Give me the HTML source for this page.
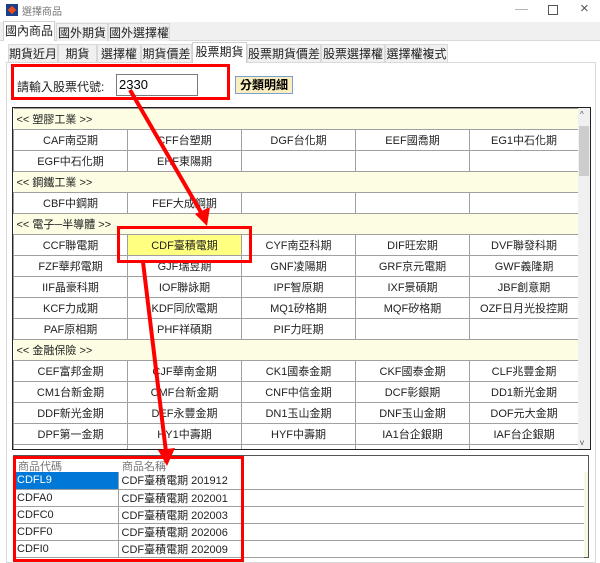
<!DOCTYPE html>
<html><head><meta charset="utf-8">
<style>
*{margin:0;padding:0;box-sizing:border-box}
body{width:600px;height:563px;background:#f0f0f0;position:relative;overflow:hidden;font-family:"Liberation Sans","Noto Sans CJK TC",sans-serif;font-size:11px;color:#222}
.a{position:absolute}
.tab{position:absolute;border:1px solid #d9d9d9;border-bottom:none;background:#f0f0f0;font-size:12px;text-align:center;line-height:18px;color:#222}
table{border-collapse:collapse;table-layout:fixed}
#g td{height:21px;border:1px solid #a0a0a0;border-top:1px solid #9a9a9a;text-align:center;font-size:11px;background:#fff;padding:0;white-space:nowrap}
#g td.h{background:#fdfde3;text-align:left;padding-left:3px;border-left:none;border-right:none}
#l td{height:17px;border-bottom:1px solid #a0a0a0;padding-left:3px;font-size:11px;white-space:nowrap;background:#fff}
</style></head><body>
<div class="a" style="left:0;top:0;width:600px;height:22px;background:#fff"></div>
<div class="a" style="left:6px;top:4px;width:12px;height:12px;background:#1b3f8a"></div>
<div class="a" style="left:9px;top:7px;width:6px;height:6px;background:#e84c1a;transform:rotate(45deg)"></div>
<div class="a" style="left:22px;top:3px;font-size:10px;color:#777">選擇商品</div>
<div class="a" style="left:515px;top:1px;font-size:13px;color:#aaa">—</div>
<div class="a" style="left:548px;top:5px;width:10px;height:10px;border:1px solid #555"></div>
<div class="a" style="left:580px;top:0px;font-size:15px;color:#555">×</div>
<div class="a" style="left:0;top:22px;width:600px;height:19px;background:#f0f0f0;border-bottom:1px solid #d9d9d9"></div>
<div class="tab" style="left:3px;top:21px;width:52px;height:21px;background:#fff;border-color:#d0d0d0;font-size:12px">國內商品</div>
<div class="tab" style="left:56px;top:23px;width:52px;height:18px">國外期貨</div>
<div class="tab" style="left:108px;top:23px;width:62px;height:18px">國外選擇權</div>
<div class="a" style="left:0;top:41px;width:600px;height:522px;background:#fff"></div>
<div class="a" style="left:6px;top:62px;width:590px;height:501px;border:1px solid #d9d9d9;background:#fff"></div>
<div class="tab" style="left:8px;top:44px;width:50px;height:18px">期貨近月</div>
<div class="tab" style="left:58px;top:44px;width:39px;height:18px">期貨</div>
<div class="tab" style="left:97px;top:44px;width:44px;height:18px">選擇權</div>
<div class="tab" style="left:141px;top:44px;width:51px;height:18px">期貨價差</div>
<div class="tab" style="left:192px;top:42px;width:55px;height:21px;background:#fff;border-color:#d0d0d0">股票期貨</div>
<div class="tab" style="left:247px;top:44px;width:74px;height:18px">股票期貨價差</div>
<div class="tab" style="left:321px;top:44px;width:64px;height:18px">股票選擇權</div>
<div class="tab" style="left:385px;top:44px;width:63px;height:18px">選擇權複式</div>
<div class="a" style="left:17px;top:78px;font-size:12px">請輸入股票代號:</div>
<div class="a" style="left:116px;top:74px;width:82px;height:22px;border:1px solid #7a7a7a;background:#fff;font-size:13px;padding:2px 2px;color:#000">2330</div>
<div class="a" style="left:235px;top:76px;width:58px;height:18px;border:1px solid #7aa0d0;background:#fbeec0;font-weight:bold;font-size:12px;text-align:center;line-height:16px;color:#000">分類明細</div>
<div class="a" style="left:12px;top:107px;width:579px;height:343px;border:1px solid #222;background:#fff;overflow:hidden">
<table id="g" style="position:absolute;left:0;top:0;width:565px">
<colgroup><col style="width:114px"><col style="width:114px"><col style="width:114px"><col style="width:114px"><col style="width:109px"></colgroup>
<tr><td class="h" colspan="5">&lt;&lt; 塑膠工業 &gt;&gt;</td></tr>
<tr><td>CAF南亞期</td><td>CFF台塑期</td><td>DGF台化期</td><td>EEF國喬期</td><td>EG1中石化期</td></tr>
<tr><td>EGF中石化期</td><td>EHF東陽期</td><td></td><td></td><td></td></tr>
<tr><td class="h" colspan="5">&lt;&lt; 鋼鐵工業 &gt;&gt;</td></tr>
<tr><td>CBF中鋼期</td><td>FEF大成鋼期</td><td></td><td></td><td></td></tr>
<tr><td class="h" colspan="5">&lt;&lt; 電子─半導體 &gt;&gt;</td></tr>
<tr><td>CCF聯電期</td><td style="background:#ffff80">CDF臺積電期</td><td>CYF南亞科期</td><td>DIF旺宏期</td><td>DVF聯發科期</td></tr>
<tr><td>FZF華邦電期</td><td>GJF瑞昱期</td><td>GNF凌陽期</td><td>GRF京元電期</td><td>GWF義隆期</td></tr>
<tr><td>IIF晶豪科期</td><td>IOF聯詠期</td><td>IPF智原期</td><td>IXF景碩期</td><td>JBF創意期</td></tr>
<tr><td>KCF力成期</td><td>KDF同欣電期</td><td>MQ1矽格期</td><td>MQF矽格期</td><td>OZF日月光投控期</td></tr>
<tr><td>PAF原相期</td><td>PHF祥碩期</td><td>PIF力旺期</td><td></td><td></td></tr>
<tr><td class="h" colspan="5">&lt;&lt; 金融保險 &gt;&gt;</td></tr>
<tr><td>CEF富邦金期</td><td>CJF華南金期</td><td>CK1國泰金期</td><td>CKF國泰金期</td><td>CLF兆豐金期</td></tr>
<tr><td>CM1台新金期</td><td>CMF台新金期</td><td>CNF中信金期</td><td>DCF彰銀期</td><td>DD1新光金期</td></tr>
<tr><td>DDF新光金期</td><td>DEF永豐金期</td><td>DN1玉山金期</td><td>DNF玉山金期</td><td>DOF元大金期</td></tr>
<tr><td>DPF第一金期</td><td>HY1中壽期</td><td>HYF中壽期</td><td>IA1台企銀期</td><td>IAF台企銀期</td></tr>
<tr><td></td><td></td><td></td><td></td><td></td></tr>
</table>
<div class="a" style="left:565px;top:0;width:12px;height:341px;background:#f0f0f0"></div>
<div class="a" style="left:566px;top:18px;width:10px;height:50px;background:#cdcdcd"></div>
<div class="a" style="left:567px;top:2px;font-size:8px;color:#555">^</div>
<div class="a" style="left:567px;top:330px;font-size:8px;color:#555">v</div>
</div>
<div class="a" style="left:13px;top:455px;width:576px;height:103px;border:1px solid #555;background:#f7f7e2">
<div class="a" style="left:0;top:0;width:574px;height:16px;background:#fff"></div>
<div class="a" style="left:4px;top:2px;color:#777">商品代碼</div>
<div class="a" style="left:108px;top:2px;color:#777">商品名稱</div>
<table id="l" style="position:absolute;left:0;top:16px;width:570px">
<colgroup><col style="width:104px"><col></colgroup>
<tr><td style="background:#0078d7;color:#fff">CDFL9</td><td style="border-left:1px solid #a0a0a0">CDF臺積電期 201912</td></tr>
<tr><td>CDFA0</td><td style="border-left:1px solid #a0a0a0">CDF臺積電期 202001</td></tr>
<tr><td>CDFC0</td><td style="border-left:1px solid #a0a0a0">CDF臺積電期 202003</td></tr>
<tr><td>CDFF0</td><td style="border-left:1px solid #a0a0a0">CDF臺積電期 202006</td></tr>
<tr><td>CDFI0</td><td style="border-left:1px solid #a0a0a0">CDF臺積電期 202009</td></tr>
</table>
</div>
<div class="a" style="left:11px;top:64px;width:219px;height:36px;border:3px solid #f00"></div>
<div class="a" style="left:117px;top:226px;width:135px;height:37px;border:3px solid #f00"></div>
<div class="a" style="left:13px;top:456px;width:231px;height:106px;border:3px solid #f00"></div>
<svg class="a" style="left:0;top:0" width="600" height="563">
<line x1="130" y1="90" x2="202" y2="214" stroke="#f00" stroke-width="4"/>
<polygon points="207,226 195,214 210,207" fill="#f00"/>
<line x1="143" y1="262" x2="166" y2="452" stroke="#f00" stroke-width="4"/>
<polygon points="167,466 158,450 175,448" fill="#f00"/>
</svg>
</body></html>
